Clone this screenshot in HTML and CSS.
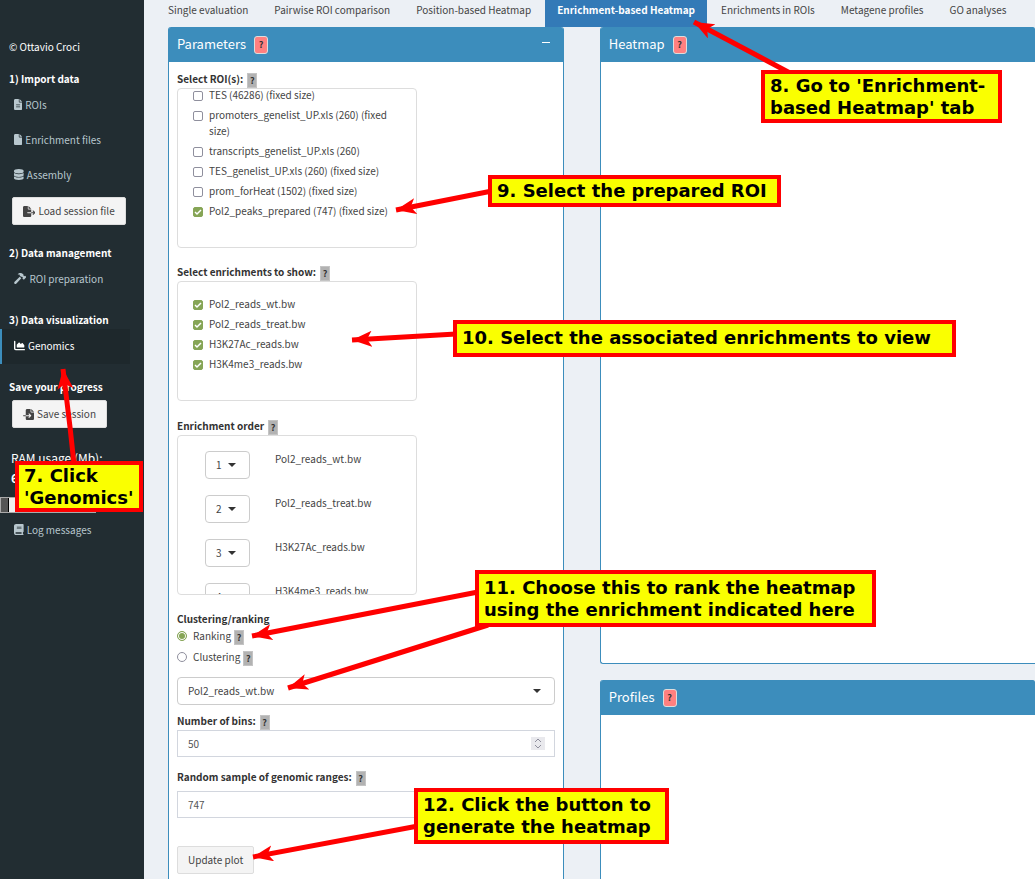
FILE: index.html
```html
<!DOCTYPE html>
<html lang="en">
<head>
<meta charset="utf-8">
<meta name="viewport" content="width=device-width, initial-scale=1">
<title>Enrichment-based Heatmap</title>
<link rel="stylesheet" href="styles.css">
</head>
<body>
<div class="app">
  <aside class="sidebar">
    <p class="author">© Ottavio Croci</p>
    <h2 class="side-title">1) Import data</h2>
    <a class="side-link" href="#"><svg class="icon" viewBox="0 0 384 512"><path d="M64 0C28.700 0 0 28.700 0 64V448c0 35.300 28.700 64 64 64H320c35.300 0 64-28.700 64-64V160H256c-17.700 0-32-14.300-32-32V0H64zM256 0V128H384L256 0zM112 256H272c8.800 0 16 7.200 16 16s-7.200 16-16 16H112c-8.800 0-16-7.200-16-16s7.200-16 16-16zm0 96H272c8.800 0 16 7.200 16 16s-7.200 16-16 16H112c-8.800 0-16-7.200-16-16s7.200-16 16-16z"/></svg>ROIs</a>
    <a class="side-link" href="#"><svg class="icon" viewBox="0 0 384 512"><path d="M0 64C0 28.700 28.700 0 64 0H224V128c0 17.700 14.300 32 32 32H384V448c0 35.300-28.700 64-64 64H64c-35.300 0-64-28.700-64-64V64zM384 128H256V0L384 128z"/></svg>Enrichment files</a>
    <a class="side-link" href="#"><svg class="icon" viewBox="0 0 448 512"><path d="M448 80v48c0 44.200-100.300 80-224 80S0 172.200 0 128V80C0 35.800 100.300 0 224 0S448 35.800 448 80zM393.200 214.700c20.800-7.400 39.900-16.900 54.800-28.600V288c0 44.200-100.300 80-224 80S0 332.200 0 288V186.100c14.900 11.800 34 21.200 54.800 28.600C99.700 230.700 159.500 240 224 240s124.300-9.300 169.200-25.300zM0 346.100c14.900 11.800 34 21.200 54.800 28.600C99.700 390.700 159.500 400 224 400s124.300-9.300 169.200-25.300c20.800-7.400 39.900-16.900 54.800-28.600V432c0 44.200-100.300 80-224 80S0 476.200 0 432V346.100z"/></svg>Assembly</a>
    <button class="btn side-btn" type="button"><svg class="icon" viewBox="0 0 576 512"><path d="M0 64C0 29 29 0 64 0H224V128c0 18 14 32 32 32H384V288H216c-13 0-24 11-24 24s11 24 24 24H384V448c0 35-29 64-64 64H64c-35 0-64-29-64-64V64zM384 336V288H494l-39-39c-9-9-9-25 0-34s25-9 34 0l80 80c9 9 9 25 0 34l-80 80c-9 9-25 9-34 0s-9-25 0-34l39-39H384zM384 128H256V0L384 128z"/></svg>Load session file</button>
    <h2 class="side-title after-btn">2) Data management</h2>
    <a class="side-link" href="#"><svg class="icon" viewBox="0 0 576 512"><path d="M170 68C235-14 350-16 414 48l31 31v50l28 27 20-20c9-9 24-9 34 0l36 36c9 9 9 25 0 34l-92 92c-9 9-25 9-34 0l-36-36c-9-9-9-25 0-34l13-13-40-40h-48l-29-29c-25-25-39-48-39-82L170 68zM268 178l72 69L114 494c-24 25-64 25-88 1s-23-63 2-86L268 178z"/></svg>ROI preparation</a>
    <h2 class="side-title">3) Data visualization</h2>
    <a class="side-link active" href="#"><svg class="icon" viewBox="0 0 512 512"><path d="M64 64c0-17.700-14.300-32-32-32S0 46.300 0 64V400c0 44.200 35.800 80 80 80H480c17.700 0 32-14.300 32-32s-14.300-32-32-32H80c-8.800 0-16-7.200-16-16V64zm96 288H448c17.700 0 32-14.300 32-32V251.800c0-7.600-2.700-15-7.700-20.800l-65.800-76.800c-12.100-14.200-33.700-15-46.900-1.800l-21 21c-10 10-26.400 9.200-35.400-1.600l-39.200-47c-12.600-15.100-35.700-15.400-48.700-.6L135.900 215c-5.100 5.800-7.900 13.300-7.900 21.100v84c0 17.700 14.300 32 32 32z"/></svg>Genomics</a>
    <h2 class="side-title">Save your progress</h2>
    <button class="btn side-btn" type="button"><svg class="icon" viewBox="0 0 512 512"><path d="M128 64c0-35 29-64 64-64H352V128c0 18 14 32 32 32H512V448c0 35-29 64-64 64H192c-35 0-64-29-64-64V336H302l-39 39c-9 9-9 25 0 34s25 9 34 0l80-80c9-9 9-25 0-34l-80-80c-9-9-25-9-34 0s-9 25 0 34l39 39H128V64zM128 288v48H24c-13 0-24-11-24-24s11-24 24-24H128zM512 128H384V0L512 128z"/></svg>Save session</button>
    <p class="ram">RAM usage (Mb):<br><b>6</b></p>
    <div class="ram-bar"><span class="ram-used"></span></div>
    <a class="side-link" href="#"><svg class="icon" viewBox="0 0 448 512"><path d="M96 0C43 0 0 43 0 96V416c0 53 43 96 96 96H416c18 0 32-14 32-32s-14-32-32-32V384c18 0 32-14 32-32V32c0-18-14-32-32-32H96zm0 384H352v64H96c-18 0-32-14-32-32s14-32 32-32zm32-240c0-9 7-16 16-16H336c9 0 16 7 16 16s-7 16-16 16H144c-9 0-16-7-16-16zm16 48H336c9 0 16 7 16 16s-7 16-16 16H144c-9 0-16-7-16-16s7-16 16-16z"/></svg>Log messages</a>
  </aside>

  <main class="content">
    <nav class="tabs">
      <a class="tab" href="#">Single evaluation</a>
      <a class="tab" href="#">Pairwise ROI comparison</a>
      <a class="tab" href="#">Position-based Heatmap</a>
      <a class="tab current" href="#">Enrichment-based Heatmap</a>
      <a class="tab" href="#">Enrichments in ROIs</a>
      <a class="tab" href="#">Metagene profiles</a>
      <a class="tab" href="#">GO analyses</a>
    </nav>
    <div class="columns">
      <section class="box">
        <header class="box-head"><h3>Parameters</h3><button class="help-red" type="button">?</button><button class="collapse" type="button" aria-label="Collapse"></button></header>
        <form class="box-body">
          <div class="label">Select ROI(s): <button class="help" type="button">?</button></div>
          <div class="list tall">
            <div class="checks scrolled">
              <label class="check"><input type="checkbox"><span>TES (46286) (fixed size)</span></label>
              <label class="check"><input type="checkbox"><span>promoters_genelist_UP.xls (260) (fixed size)</span></label>
              <label class="check"><input type="checkbox"><span>transcripts_genelist_UP.xls (260)</span></label>
              <label class="check"><input type="checkbox"><span>TES_genelist_UP.xls (260) (fixed size)</span></label>
              <label class="check"><input type="checkbox"><span>prom_forHeat (1502) (fixed size)</span></label>
              <label class="check"><input type="checkbox" checked><span>Pol2_peaks_prepared (747) (fixed size)</span></label>
            </div>
          </div>
          <div class="label">Select enrichments to show: <button class="help" type="button">?</button></div>
          <div class="list short">
            <div class="checks">
              <label class="check"><input type="checkbox" checked><span>Pol2_reads_wt.bw</span></label>
              <label class="check"><input type="checkbox" checked><span>Pol2_reads_treat.bw</span></label>
              <label class="check"><input type="checkbox" checked><span>H3K27Ac_reads.bw</span></label>
              <label class="check"><input type="checkbox" checked><span>H3K4me3_reads.bw</span></label>
            </div>
          </div>
          <div class="label">Enrichment order <button class="help" type="button">?</button></div>
          <div class="list tall">
            <div class="orders">
              <div class="order"><span class="pick"><select id="o1"><option>1</option></select></span><label for="o1">Pol2_reads_wt.bw</label></div>
              <div class="order"><span class="pick"><select id="o2"><option>2</option></select></span><label for="o2">Pol2_reads_treat.bw</label></div>
              <div class="order"><span class="pick"><select id="o3"><option>3</option></select></span><label for="o3">H3K27Ac_reads.bw</label></div>
              <div class="order"><span class="pick"><select id="o4"><option>4</option></select></span><label for="o4">H3K4me3_reads.bw</label></div>
            </div>
          </div>
          <div class="label">Clustering/ranking</div>
          <div class="radios">
            <div class="radio"><input type="radio" name="mode" id="rank" checked><label for="rank">Ranking</label><button class="help" type="button">?</button></div>
            <div class="radio"><input type="radio" name="mode" id="clus"><label for="clus">Clustering</label><button class="help" type="button">?</button></div>
          </div>
          <span class="pick wide"><select aria-label="Ranking enrichment"><option>Pol2_reads_wt.bw</option></select></span>
          <div class="label"><label for="bins">Number of bins:</label> <button class="help" type="button">?</button></div>
          <div class="number"><input type="number" id="bins" value="50"><svg class="spin" viewBox="0 0 14 13"><path d="M4 5l3-3 3 3M4 8l3 3 3-3"/></svg></div>
          <div class="label spaced"><label for="sample">Random sample of genomic ranges:</label> <button class="help" type="button">?</button></div>
          <div class="number"><input type="number" id="sample" value="747"></div>
          <button class="btn update" type="button">Update plot</button>
        </form>
      </section>
      <div class="plots">
        <section class="box heatmap"><header class="box-head"><h3>Heatmap</h3><button class="help-red" type="button">?</button></header></section>
        <section class="box profiles"><header class="box-head"><h3>Profiles</h3><button class="help-red" type="button">?</button></header></section>
      </div>
    </div>
  </main>
</div>

<div class="notes">
  <svg class="arrows" width="1035" height="879" viewBox="0 0 1035 879">
    <defs><marker id="head" markerUnits="userSpaceOnUse" markerWidth="24" markerHeight="20" refX="20" refY="8" orient="auto"><path d="M20 8L0 0L5 8L0 16Z" fill="#f00"/></marker></defs>
    <g class="shafts">
      <path d="M74 464L70 427L63 369"/><path d="M790 73L694 22"/><path d="M492 191L396 210"/><path d="M456 334L352 340"/><path d="M478 592L252 636"/><path d="M488 625L288 688"/><path d="M418 826L253 857"/>
    </g>
  </svg>
  <p class="note n7">7. Click<br>'Genomics'</p>
  <p class="note n8">8. Go to 'Enrichment-<br>based Heatmap' tab</p>
  <p class="note n9">9. Select the prepared ROI</p>
  <p class="note n10">10. Select the associated enrichments to view</p>
  <p class="note n11">11. Choose this to rank the heatmap<br>using the enrichment indicated here</p>
  <p class="note n12">12. Click the button to<br>generate the heatmap</p>
</div>
</body>
</html>
```
FILE: styles.css
```css
* { box-sizing: border-box; }
body {
  margin: 0;
  font: 10px/16px "Noto Sans CJK SC", "Open Sans", sans-serif;
  color: #444;
  background: #ecf0f5;
  overflow: hidden;
}
button, input, select { font: inherit; color: inherit; margin: 0; }
h2, h3, p { margin: 0; font-weight: normal; }
a { color: inherit; text-decoration: none; }

.app { display: flex; height: 100vh; overflow: hidden; }

/* Sidebar */
.sidebar { flex: 0 0 144px; background: #222d32; color: #fff; padding-top: 38px; }
.author { padding-left: 9px; line-height: 18px; }
.side-title { margin-top: 14px; padding-left: 9px; font-size: 10px; line-height: 18px; font-weight: bold; }
.side-title.after-btn { margin-top: 19px; }
.side-link {
  display: flex; align-items: center; gap: 3px;
  width: 130px; height: 35px; padding: 0 0 2px 12px;
  border-left: 2px solid transparent;
  color: #b8c7ce;
}
.side-link.active { color: #fff; background: #1e282c; border-left-color: #3c8dbc; }
.icon { height: 11px; fill: currentColor; flex: none; }
.btn {
  display: flex; align-items: center; gap: 3px;
  height: 28px; padding: 0 10px;
  color: #444; background: #f4f4f4; border: 1px solid #ddd; border-radius: 2px;
}
.side-btn { margin: 4px 0 0 12px; }
.ram { margin-top: 20px; padding-left: 11px; font-size: 12px; line-height: 20px; }
.ram-bar { display: flex; width: 96px; height: 16px; margin-top: 9px; background: #eee; border: 1px solid #aaa; }
.ram-used { width: 8px; background: #555; border-right: 1px solid #000; }

/* Tabs */
.content { flex: 1; min-width: 0; }
.tabs { display: flex; gap: 2px; padding-left: 12px; white-space: nowrap; }
.tab { padding: 2px 12px 9px; }
.tab.current { background: #337ab7; color: #fff; font-weight: bold; }

/* Boxes */
.columns { display: grid; grid-template-columns: minmax(0, 10fr) minmax(0, 11fr); gap: 36px; padding-left: 24px; }
.box { background: #fff; border: 1px solid #3c8dbc; border-top: 0; border-radius: 3px; }
.plots .box { border-right: 0; border-radius: 3px 0 0 3px; }
.heatmap { height: 637px; margin-bottom: 16px; }
.profiles { height: 400px; }
.box-head {
  display: flex; align-items: center; gap: 8px;
  height: 35px; padding: 0 13px 1px 8px;
  background: #3c8dbc; color: #fff; border-radius: 2px 2px 0 0;
}
.box-head h3 { font-size: 13px; line-height: 18px; }
.help-red {
  width: 14px; height: 18px; padding: 0; margin-top: 1px;
  font-size: 9px; line-height: 16px; color: #333; font-weight: bold;
  background: #ff8080; border: 1px solid #ddd; border-radius: 3px;
}
.collapse { width: 8px; height: 1px; margin-left: auto; margin-bottom: 3px; padding: 0; border: 0; background: #fff; }
.box-body { padding: 8px 8px 20px; }
.label { display: flex; align-items: center; gap: 4px; height: 18px; color: #333; font-weight: bold; }
.label.spaced { margin: 11px 0 5px; }
.help {
  width: 10px; height: 15px; padding: 0; margin-top: 3px;
  font-size: 9px; line-height: 13px; color: #333; font-weight: bold;
  background: #b2b2b2; border: 1px solid #c4c4c4; border-radius: 0;
}
.list { width: 240px; margin-bottom: 15px; border: 1px solid #ddd; border-radius: 4px; overflow: hidden; }
.tall { height: 160px; }
.short { height: 120px; margin-bottom: 16px; }
.checks { display: flex; flex-direction: column; gap: 4px; padding: 14px 15px; }
.checks.scrolled { margin-top: -16px; }
.check { display: flex; gap: 6px; }
.check input {
  appearance: none; flex: none; width: 10px; height: 10px; margin-top: 4px;
  background: #fff; border: 1px solid #8f8f9d; border-radius: 2px;
}
.check input:checked {
  border-color: #86a556;
  background: #86a556 url("data:image/svg+xml,%3Csvg xmlns='http://www.w3.org/2000/svg' viewBox='0 0 8 8'%3E%3Cpath d='M1 4l2 2 4-4' fill='none' stroke='white' stroke-width='1.500'/%3E%3C/svg%3E");
}
.orders { display: flex; flex-direction: column; gap: 16px; padding: 15px 27px; }
.order { display: flex; gap: 25px; }
.pick { display: grid; align-items: center; height: 28px; }
.order .pick { width: 45px; }
.pick select {
  grid-area: 1 / 1; appearance: none; width: 100%; height: 28px; padding: 0 10px;
  background: #fff; border: 1px solid #ccc; border-radius: 4px;
}
.pick::after {
  content: ""; grid-area: 1 / 1; justify-self: end; margin-right: 14px; pointer-events: none;
  border: 4px solid transparent; border-top-color: #333; border-bottom: 0;
}
.radios { display: flex; flex-direction: column; gap: 5px; }
.radio { display: flex; align-items: center; height: 16px; gap: 3px; }
.radio input {
  appearance: none; width: 10px; height: 10px; margin-right: 3px;
  background: #fff; border: 1px solid #8f8f9d; border-radius: 50%;
}
.radio input:checked { border-color: #86a556; background: #86a556; box-shadow: inset 0 0 0 1px #fff; }
.pick.wide { margin: 12px 0 7px; }
.number { display: grid; align-items: center; }
.number input {
  grid-area: 1 / 1; appearance: textfield; width: 100%; height: 27px; padding: 0 10px;
  color: #555; background: #fff; border: 1px solid #d2d6de; border-radius: 0;
}
.number input::-webkit-inner-spin-button { appearance: none; }
.spin { grid-area: 1 / 1; justify-self: end; width: 14px; height: 13px; margin-right: 10px; background: #e9e9ed; fill: none; stroke: #8f8f9d; }
.update { margin-top: 28px; }

/* Callouts laid over the page */
.notes { position: absolute; inset: 0; overflow: hidden; pointer-events: none; }
.arrows { position: absolute; left: 0; top: 0; }
.shafts path { fill: none; stroke: #f00; stroke-width: 5; marker-end: url(#head); }
.note {
  position: absolute; padding: 0 5px; display: flex; align-items: center;
  font: bold 18px/22px "DejaVu Sans", sans-serif; color: #000; white-space: nowrap;
  background: #faff00; border: 4px solid #f00;
}
.n7 { left: 15px; top: 461px; width: 128px; height: 51px; }
.n8 { left: 761px; top: 70px; width: 241px; height: 53px; }
.n9 { left: 488px; top: 175px; width: 293px; height: 32px; }
.n10 { left: 453px; top: 320px; width: 503px; height: 37px; padding-bottom: 2px; }
.n11 { left: 475px; top: 570px; width: 401px; height: 57px; }
.n12 { left: 414px; top: 788px; width: 255px; height: 56px; }
```
